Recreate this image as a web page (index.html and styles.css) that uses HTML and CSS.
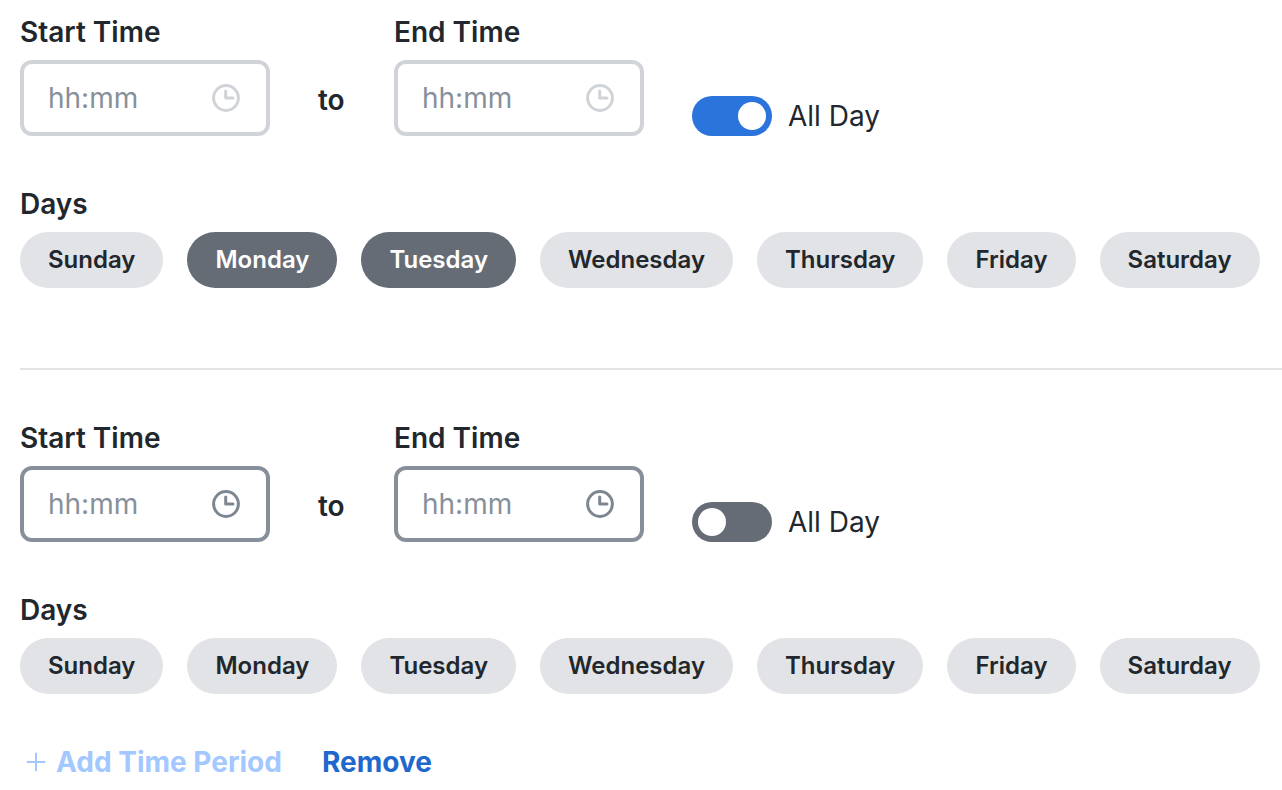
FILE: index.html
```
<!DOCTYPE html>
<html lang="en">
<head>
    <meta charset="UTF-8">
    <meta name="viewport" content="width=device-width, initial-scale=1.0">
    <title>Time Periods</title>
    <link rel="stylesheet" href="styles.css">
</head>
<body>

<form class="schedule">
    <section class="period">
        <div class="times">
            <div class="field">
                <label for="start-1">Start Time</label>
                <div class="time-box disabled">
                    <input type="text" id="start-1" placeholder="hh:mm" disabled>
                    <svg class="clock" viewBox="0 0 28 28"><circle cx="14" cy="14" r="12.4"/><path d="M13.700 7v7h7.300"/></svg>
                </div>
            </div>
            <span class="to">to</span>
            <div class="field">
                <label for="end-1">End Time</label>
                <div class="time-box disabled">
                    <input type="text" id="end-1" placeholder="hh:mm" disabled>
                    <svg class="clock" viewBox="0 0 28 28"><circle cx="14" cy="14" r="12.4"/><path d="M13.700 7v7h7.300"/></svg>
                </div>
            </div>
            <label class="all-day"><input type="checkbox" class="toggle" checked>All Day</label>
        </div>
        <h3>Days</h3>
        <div class="days">
            <button type="button" class="day">Sunday</button>
            <button type="button" class="day selected">Monday</button>
            <button type="button" class="day selected">Tuesday</button>
            <button type="button" class="day">Wednesday</button>
            <button type="button" class="day">Thursday</button>
            <button type="button" class="day">Friday</button>
            <button type="button" class="day">Saturday</button>
        </div>
    </section>

    <section class="period">
        <div class="times">
            <div class="field">
                <label for="start-2">Start Time</label>
                <div class="time-box">
                    <input type="text" id="start-2" placeholder="hh:mm">
                    <svg class="clock" viewBox="0 0 28 28"><circle cx="14" cy="14" r="12.4"/><path d="M13.700 7v7h7.300"/></svg>
                </div>
            </div>
            <span class="to">to</span>
            <div class="field">
                <label for="end-2">End Time</label>
                <div class="time-box">
                    <input type="text" id="end-2" placeholder="hh:mm">
                    <svg class="clock" viewBox="0 0 28 28"><circle cx="14" cy="14" r="12.4"/><path d="M13.700 7v7h7.300"/></svg>
                </div>
            </div>
            <label class="all-day"><input type="checkbox" class="toggle">All Day</label>
        </div>
        <h3>Days</h3>
        <div class="days">
            <button type="button" class="day">Sunday</button>
            <button type="button" class="day">Monday</button>
            <button type="button" class="day">Tuesday</button>
            <button type="button" class="day">Wednesday</button>
            <button type="button" class="day">Thursday</button>
            <button type="button" class="day">Friday</button>
            <button type="button" class="day">Saturday</button>
        </div>
    </section>

    <div class="actions">
        <button type="button" class="link-button" disabled>
            <svg class="plus" viewBox="0 0 20 20"><path d="M10 1.500v17M1.500 10h17"/></svg>
            Add Time Period
        </button>
        <button type="button" class="link-button">Remove</button>
    </div>
</form>

</body>
</html>
```
FILE: styles.css
```
* {
    box-sizing: border-box;
}
body {
    font-family: Inter, sans-serif;
    font-size: 28px;
    line-height: 40px;
    color: #21272c;
    background-color: white;
    margin: 0;
}
button, input {
    font-family: inherit;
    font-size: inherit;
    line-height: inherit;
}
.schedule {
    padding: 12px 0 0 20px;
}
.period + .period {
    border-top: 2px solid #e2e3e7;
    margin-top: 80px;
    padding-top: 48px;
}
.times {
    display: flex;
    align-items: flex-end;
    gap: 48px;
}
.field {
    width: 250px;
}
.field label, .period h3, .to {
    display: block;
    font-size: 28px;
    font-weight: 600;
    margin: 0;
}
.field label, .period h3 {
    margin-bottom: 8px;
}
.to {
    min-width: 28px;
    padding-bottom: 16px;
}
.time-box {
    display: flex;
    align-items: center;
    height: 76px;
    padding: 0 26px 0 24px;
    border: 4px solid #87909a;
    border-radius: 12px;
    color: #7d8791;
}
.time-box input {
    flex: 1;
    min-width: 0;
    padding: 0;
    border: none;
    outline: none;
    background: none;
    color: #21272c;
}
.time-box input::placeholder {
    color: #87909a;
    opacity: 1;
}
.time-box.disabled {
    border-color: #d0d3d8;
    color: #d0d3d8;
}
.clock {
    width: 28px;
    height: 28px;
    fill: none;
    stroke: currentColor;
    stroke-width: 3;
    stroke-linecap: round;
    stroke-linejoin: round;
}
.all-day {
    display: flex;
    align-items: center;
    gap: 16px;
}
.toggle {
    appearance: none;
    display: flex;
    width: 80px;
    height: 40px;
    margin: 0;
    padding: 6px;
    border-radius: 20px;
    background-color: #666c76;
    cursor: pointer;
}
.toggle::before {
    content: "";
    width: 28px;
    height: 28px;
    border-radius: 50%;
    background-color: white;
}
.toggle:checked {
    justify-content: flex-end;
    background-color: #2a74db;
}
.period h3 {
    margin-top: 48px;
}
.days {
    display: flex;
    gap: 24px;
}
.day {
    height: 56px;
    padding: 0 28px;
    border: none;
    border-radius: 28px;
    background-color: #e2e3e7;
    color: #21272c;
    font-size: 24px;
    font-weight: 600;
    cursor: pointer;
}
.day.selected {
    background-color: #666c76;
    color: white;
}
.actions {
    display: flex;
    gap: 40px;
    padding: 48px 0 8px 6px;
}
.link-button {
    display: flex;
    align-items: center;
    gap: 10px;
    padding: 0;
    border: none;
    background: none;
    color: #1f68cd;
    font-weight: 700;
    cursor: pointer;
}
.link-button:disabled {
    color: #a3c7ff;
    cursor: default;
}
.plus {
    width: 20px;
    height: 20px;
    fill: none;
    stroke: currentColor;
    stroke-width: 2;
    stroke-linecap: round;
}
```
